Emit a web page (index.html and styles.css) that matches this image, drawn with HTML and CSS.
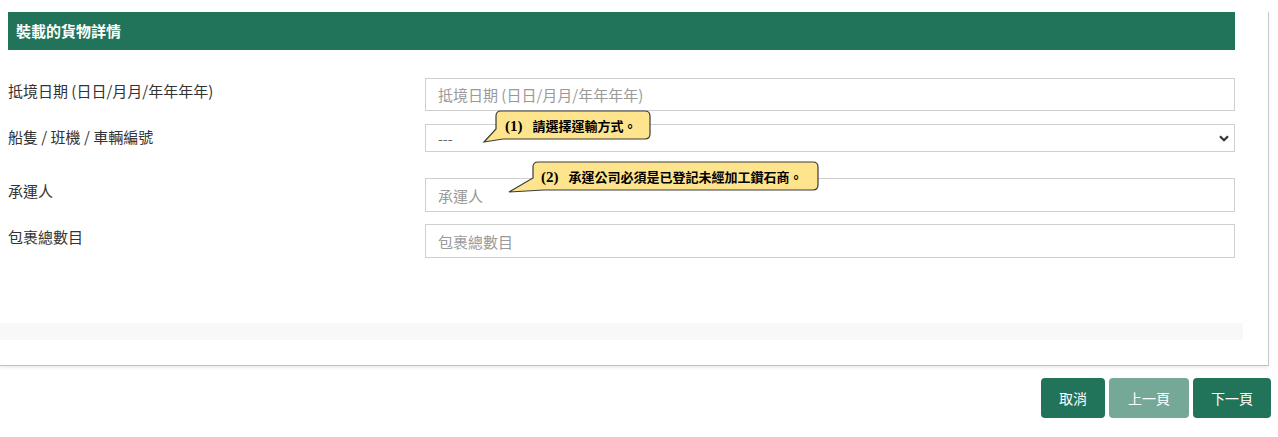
FILE: index.html
```html
<!DOCTYPE html>
<html lang="zh-Hant">
<head>
    <meta charset="UTF-8">
    <title>裝載的貨物詳情</title>
    <link rel="stylesheet" href="styles.css">
</head>
<body>
    <div class="card">
        <div class="section-header">裝載的貨物詳情</div>

        <div class="form">
            <div class="form-row row-date">
                <label class="form-label">抵境日期 (日日/月月/年年年年)</label>
                <div class="form-field">
                    <input type="text" class="form-input" placeholder="抵境日期 (日日/月月/年年年年)">
                </div>
            </div>

            <div class="form-row row-vessel">
                <label class="form-label">船隻 / 班機 / 車輛編號</label>
                <div class="form-field">
                    <select class="form-select">
                        <option>---</option>
                    </select>
                    <svg class="select-arrow" width="10" height="7" viewBox="0 0 10 7">
                        <path d="M1 1.2 L5 5.2 L9 1.2" fill="none" stroke="#333" stroke-width="2.2"/>
                    </svg>
                    <div class="callout callout-one">
                        <svg class="callout-shape" width="172" height="36" viewBox="0 0 172 36">
                            <path d="M21,3 H165 Q170,3 170,8 V26 Q170,31 165,31 H23 L4,34 L16,21 V8 Q16,3 21,3 Z"/>
                        </svg>
                        <span class="callout-text"><span class="callout-num">(1)</span>請選擇運輸方式。</span>
                    </div>
                </div>
            </div>

            <div class="form-row row-carrier">
                <label class="form-label">承運人</label>
                <div class="form-field">
                    <input type="text" class="form-input" placeholder="承運人">
                    <div class="callout callout-two">
                        <svg class="callout-shape" width="314" height="36" viewBox="0 0 314 36">
                            <path d="M32,4 H307 Q312,4 312,9 V27 Q312,32 307,32 H38 L3,34 L27,20 V9 Q27,4 32,4 Z"/>
                        </svg>
                        <span class="callout-text"><span class="callout-num">(2)</span>承運公司必須是已登記未經加工鑽石商。</span>
                    </div>
                </div>
            </div>

            <div class="form-row row-packages">
                <label class="form-label">包裹總數目</label>
                <div class="form-field">
                    <input type="text" class="form-input" placeholder="包裹總數目">
                </div>
            </div>
        </div>

        <div class="card-strip"></div>
    </div>

    <div class="actions">
        <button class="btn">取消</button>
        <button class="btn btn-disabled" disabled>上一頁</button>
        <button class="btn">下一頁</button>
    </div>
</body>
</html>
```

FILE: styles.css
```css
* {
    margin: 0;
    padding: 0;
    box-sizing: border-box;
}

body {
    width: 1278px;
    font-family: "Noto Sans CJK TC", "Liberation Sans", sans-serif;
    background-color: #fff;
    color: #333;
}

.card {
    width: 1269px;
    margin-top: 12px;
    padding-bottom: 25px;
    background: white;
    border-right: 1px solid #c9c9c9;
    border-bottom: 1px solid #c2c2c2;
    box-shadow: 0 2px 3px rgba(0,0,0,0.08);
}

.section-header {
    margin: 0 33px 0 8px;
    height: 38px;
    line-height: 38px;
    padding-left: 8px;
    background-color: #21735a;
    color: white;
    font-size: 15px;
    font-weight: bold;
}

.form {
    margin: 28px 33px 0 8px;
}

.form-row {
    display: grid;
    grid-template-columns: 417px 810px;
}

.row-date { margin-bottom: 13px; }
.row-vessel { margin-bottom: 26px; }
.row-carrier { margin-bottom: 12px; }

.form-label {
    padding-top: 3px;
    line-height: 20px;
    font-size: 15px;
    color: #333;
}

.form-field {
    position: relative;
}

.form-input,
.form-select {
    display: block;
    width: 100%;
    height: 34px;
    padding: 0 12px;
    border: 1px solid #cfcfcf;
    background: white;
    font-family: inherit;
    font-size: 15px;
    color: #555;
    outline: none;
}

.row-date .form-input {
    height: 33px;
}

.form-input::placeholder {
    color: #9a9a9a;
}

.form-select {
    height: 28px;
    -webkit-appearance: none;
    appearance: none;
    border-radius: 0;
    color: #666;
    font-size: 14px;
}

.select-arrow {
    position: absolute;
    right: 6px;
    top: 11px;
}

.card-strip {
    width: 1243px;
    height: 17px;
    margin-top: 65px;
    background-color: #f8f8f8;
}

/* notas amarillas */
.callout {
    position: absolute;
    height: 28px;
    display: flex;
    align-items: center;
}

.callout-one {
    left: 71px;
    top: -13px;
    width: 154px;
}

.callout-two {
    left: 108px;
    top: -16px;
    width: 285px;
}

.callout-shape {
    position: absolute;
    top: -3px;
}

.callout-one .callout-shape { left: -16px; }
.callout-two .callout-shape { left: -27px; top: -4px; }

.callout-shape path {
    fill: #fde48d;
    stroke: #3a3a3a;
    stroke-width: 1.2;
}

.callout-text {
    position: relative;
    padding-left: 9px;
    font-family: "Liberation Serif", "Noto Sans CJK TC", serif;
    font-size: 13px;
    font-weight: bold;
    color: #000;
    white-space: nowrap;
}

.callout-two .callout-text {
    padding-left: 8px;
}

.callout-num {
    font-size: 15px;
    margin-right: 10px;
}

.actions {
    display: flex;
    justify-content: flex-end;
    gap: 3px;
    width: 1271px;
    margin-top: 12px;
}

.btn {
    height: 40px;
    padding: 0 18px;
    border: none;
    border-radius: 4px;
    background-color: #21735a;
    color: white;
    font-family: inherit;
    font-size: 14px;
    cursor: pointer;
}

.btn + .btn {
    margin-left: 1px;
}

.btn-disabled {
    background-color: #76a898;
    padding: 0 19px;
    cursor: default;
}
```
